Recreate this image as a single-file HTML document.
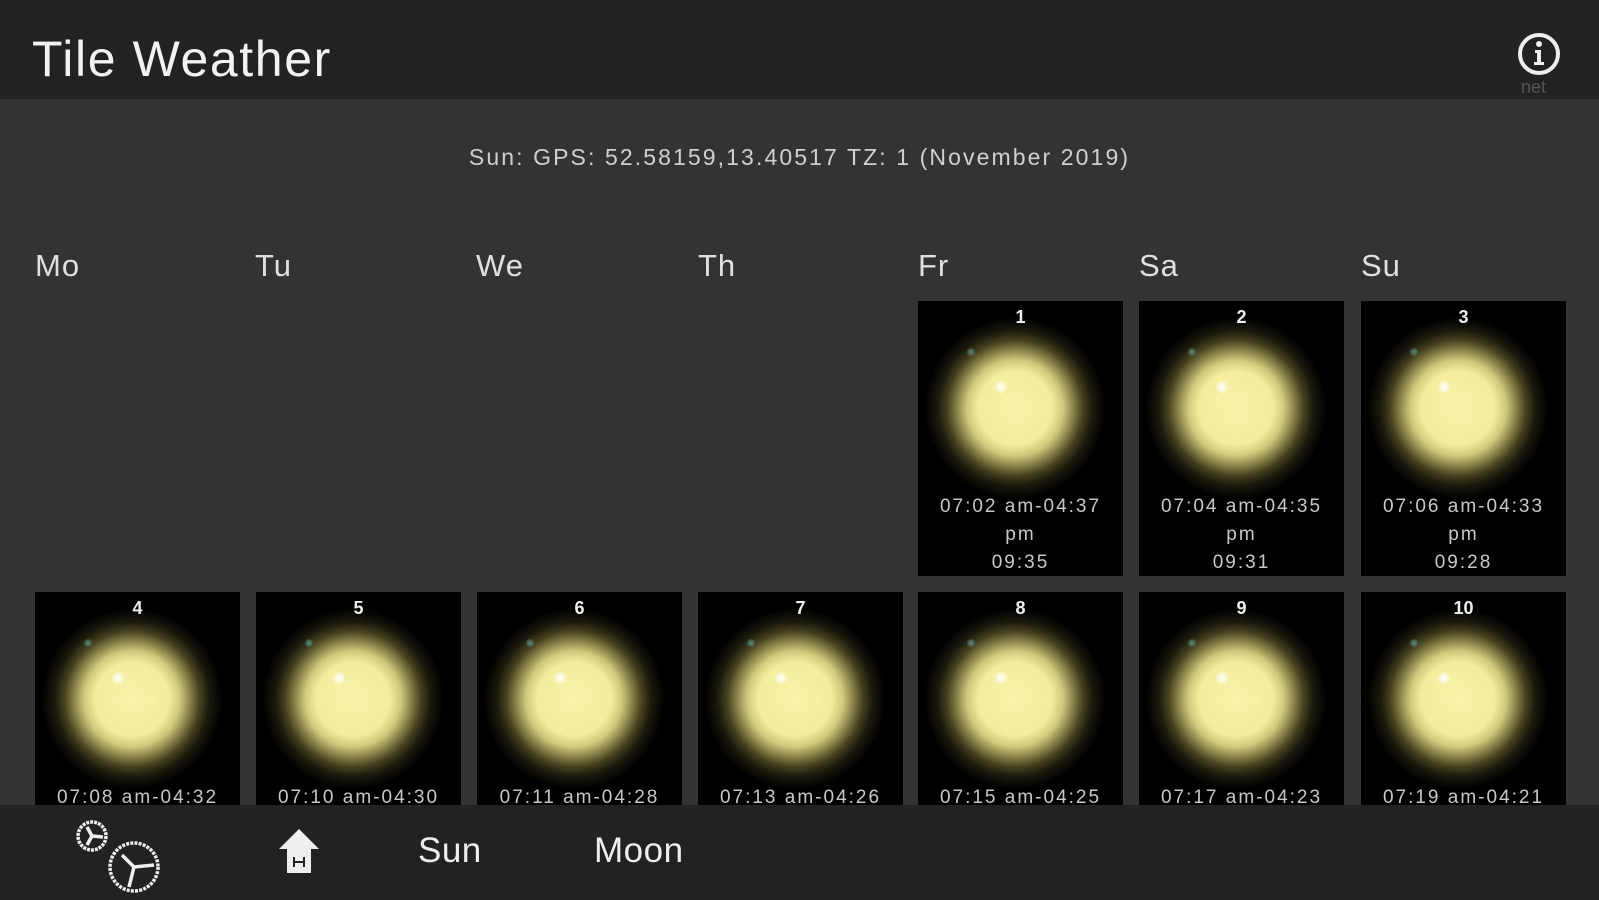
<!DOCTYPE html>
<html><head><meta charset="utf-8"><style>
*{margin:0;padding:0;box-sizing:border-box}
body{width:1599px;height:900px;background:#333;font-family:"Liberation Sans",sans-serif;position:relative;overflow:hidden;color:#e6e6e6}
.hdr{position:absolute;left:0;top:0;width:1599px;height:99px;background:#222}
.title{position:absolute;left:32px;top:30px;font-size:50px;color:#f2f2f2;letter-spacing:1.6px}
.sub{position:absolute;left:0;width:1599px;top:144px;text-align:center;font-size:23px;color:#d0d0d0;letter-spacing:2.1px}
.day{position:absolute;top:248px;font-size:31px;color:#e0e0e0;letter-spacing:1px}
.tile{position:absolute;width:205px;height:275px;background:#000;overflow:hidden}
.num{position:absolute;top:6px;width:100%;text-align:center;font-size:18px;font-weight:bold;color:#eee;z-index:2}
.sun{position:absolute;left:-3px;top:7px;width:200px;height:200px;border-radius:50%;
background:radial-gradient(circle at 50% 50%,#f8f3a8 0%,#f4ed9e 26%,#cfc77a 34%,#8a844a 41%,#45421f 48%,#1a190c 55%,rgba(0,0,0,0) 64%)}
.hl{position:absolute;left:80px;top:73px;width:12px;height:12px;border-radius:50%;background:radial-gradient(#fff,rgba(255,255,240,0))}
.dot{position:absolute;left:52px;top:40px;width:8px;height:8px;border-radius:50%;background:radial-gradient(#5a8a80,rgba(0,0,0,0))}
.t{position:absolute;left:-10px;width:225px;text-align:center;font-size:19px;color:#c8c8c8;line-height:28px;top:192px;letter-spacing:2px}
.ftr{position:absolute;left:0;top:805px;width:1599px;height:95px;background:#222}
.fl{position:absolute;top:26px;font-size:35px;color:#eee;letter-spacing:0.5px}
</style></head><body>
<div class="hdr"><div class="title">Tile Weather</div>
<svg style="position:absolute;left:1516px;top:31px" width="46" height="46" viewBox="0 0 46 46"><circle cx="23" cy="23" r="19" fill="none" stroke="#eee" stroke-width="4"/><circle cx="23" cy="13" r="3" fill="#eee"/><path d="M19 19h6v12h3v3h-10v-3h3v-9h-2z" fill="#eee"/></svg>
<div style="position:absolute;left:1521px;top:77px;font-size:18px;color:#555">net</div>
</div>
<div class="sub">Sun: GPS: 52.58159,13.40517 TZ: 1 (November 2019)</div>
<div class="day" style="left:35px">Mo</div><div class="day" style="left:255px">Tu</div><div class="day" style="left:476px">We</div><div class="day" style="left:698px">Th</div><div class="day" style="left:918px">Fr</div><div class="day" style="left:1139px">Sa</div><div class="day" style="left:1361px">Su</div>

<div class="tile" style="left:918px;top:301px"><div class="num">1</div><div class="sun"><div class="dot"></div><div class="hl"></div></div><div class="t">07:02 am-04:37<br>pm<br>09:35</div></div>
<div class="tile" style="left:1139px;top:301px"><div class="num">2</div><div class="sun"><div class="dot"></div><div class="hl"></div></div><div class="t">07:04 am-04:35<br>pm<br>09:31</div></div>
<div class="tile" style="left:1361px;top:301px"><div class="num">3</div><div class="sun"><div class="dot"></div><div class="hl"></div></div><div class="t">07:06 am-04:33<br>pm<br>09:28</div></div>

<div class="tile" style="left:35px;top:592px"><div class="num">4</div><div class="sun"><div class="dot"></div><div class="hl"></div></div><div class="t">07:08 am-04:32</div></div>
<div class="tile" style="left:256px;top:592px"><div class="num">5</div><div class="sun"><div class="dot"></div><div class="hl"></div></div><div class="t">07:10 am-04:30</div></div>
<div class="tile" style="left:477px;top:592px"><div class="num">6</div><div class="sun"><div class="dot"></div><div class="hl"></div></div><div class="t">07:11 am-04:28</div></div>
<div class="tile" style="left:698px;top:592px"><div class="num">7</div><div class="sun"><div class="dot"></div><div class="hl"></div></div><div class="t">07:13 am-04:26</div></div>
<div class="tile" style="left:918px;top:592px"><div class="num">8</div><div class="sun"><div class="dot"></div><div class="hl"></div></div><div class="t">07:15 am-04:25</div></div>
<div class="tile" style="left:1139px;top:592px"><div class="num">9</div><div class="sun"><div class="dot"></div><div class="hl"></div></div><div class="t">07:17 am-04:23</div></div>
<div class="tile" style="left:1361px;top:592px"><div class="num">10</div><div class="sun"><div class="dot"></div><div class="hl"></div></div><div class="t">07:19 am-04:21</div></div>

<div class="ftr">
<svg style="position:absolute;left:74px;top:14px" width="90" height="76" viewBox="0 0 90 76"><g fill="none" stroke="#eee" stroke-width="3.5"><circle cx="18" cy="17" r="14" stroke-dasharray="3 1"/><path d="M18 17l-5-9M18 17l11 1M18 17l-5 9"/><circle cx="60" cy="48" r="24" stroke-dasharray="3 1.2"/><path d="M60 48l-12-12M60 48l20 -2M60 48l-5 20"/></g></svg>
<svg style="position:absolute;left:277px;top:22px" width="44" height="48" viewBox="0 0 44 48"><path d="M22 2L42 22H34V46H10V22H2Z" fill="#eee"/><path d="M17 30v10M27 30v10M17 35h10" stroke="#222" stroke-width="2"/></svg>
<div class="fl" style="left:418px">Sun</div>
<div class="fl" style="left:594px">Moon</div>
</div>
</body></html>
